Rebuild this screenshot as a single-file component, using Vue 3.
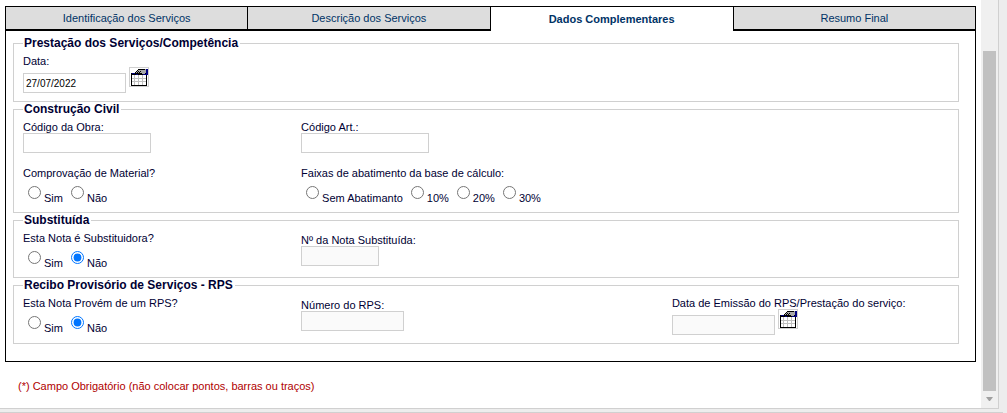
<script setup>
import { ref } from 'vue'

const tabs = ['Identificação dos Serviços', 'Descrição dos Serviços', 'Dados Complementares', 'Resumo Final']
const active = ref(2)

const data = ref('27/07/2022')
const codigoObra = ref('')
const codigoArt = ref('')
const material = ref('')
const faixa = ref('')
const substituidora = ref('Não')
const notaSubstituida = ref('')
const provemRps = ref('Não')
const numeroRps = ref('')
const dataRps = ref('')

const simNao = ['Sim', 'Não']
const faixas = ['Sem Abatimanto', '10%', '20%', '30%']
</script>

<template>
  <div class="frame">
    <div class="viewport">
      <main class="page">
        <form class="panel" @submit.prevent>
          <nav class="tabs">
            <button
              v-for="(tab, i) in tabs"
              :key="tab"
              type="button"
              class="tab"
              :class="{ active: i === active, after: i > active }"
              @click="active = i"
            >{{ tab }}</button>
          </nav>
          <div class="body">
            <fieldset>
              <legend>Prestação dos Serviços/Competência</legend>
              <div class="field">
                <label for="data">Data:</label>
                <div class="date-row">
                  <input id="data" v-model="data" type="text" class="medium" />
                  <button type="button" class="calendar" aria-label="Calendário">
                    <svg viewBox="0 0 18 18" width="18" height="18" shape-rendering="crispEdges">
                      <g id="calendar-icon">
                        <path fill="#000" d="M1 5h16v13H1z" />
                        <path fill="#fff" d="M2 7h14v10H2z" />
                        <path fill="#c0c0c0" d="M4 7h1v10H4zM8 7h1v10H8zM12 7h1v10h-1zM2 10h14v1H2zM2 13h14v1H2z" />
                        <path fill="#000080" d="M16 1h2v6h-2zM2 5h3v1H2zM13 6h3v1h-3zM6 6h2v1H6z" />
                        <path fill="#a8a8a8" d="M8 1h8v4h-1v1h-5V5H5V4h1V3h1V2h1z" />
                        <path fill="#000" d="M8 1h7v1H8zM7 2h1v1H7zM6 3h1v1H6zM5 4h1v1H5zM8 3h1v1H8zM7 4h1v1H7zM9 4h1v1H9zM6 5h1v1H6zM8 5h1v1H8zM10 5h2v1h-2zM10 3h1v1h-1z" />
                      </g>
                    </svg>
                  </button>
                </div>
              </div>
            </fieldset>

            <fieldset>
              <legend>Construção Civil</legend>
              <div class="columns spaced">
                <div class="field">
                  <label for="obra">Código da Obra:</label>
                  <input id="obra" v-model="codigoObra" type="text" class="wide" />
                </div>
                <div class="field">
                  <label for="art">Código Art.:</label>
                  <input id="art" v-model="codigoArt" type="text" class="wide" />
                </div>
              </div>
              <div class="columns">
                <div class="field" role="radiogroup" aria-labelledby="q-material">
                  <span id="q-material">Comprovação de Material?</span>
                  <div class="radios">
                    <label v-for="o in simNao" :key="o"><input v-model="material" type="radio" name="material" :value="o" /><span>{{ o }}</span></label>
                  </div>
                </div>
                <div class="field" role="radiogroup" aria-labelledby="q-faixa">
                  <span id="q-faixa">Faixas de abatimento da base de cálculo:</span>
                  <div class="radios">
                    <label v-for="o in faixas" :key="o"><input v-model="faixa" type="radio" name="faixa" :value="o" /><span>{{ o }}</span></label>
                  </div>
                </div>
              </div>
            </fieldset>

            <fieldset>
              <legend>Substituída</legend>
              <div class="columns">
                <div class="field" role="radiogroup" aria-labelledby="q-subst">
                  <span id="q-subst">Esta Nota é Substituidora?</span>
                  <div class="radios">
                    <label v-for="o in simNao" :key="o"><input v-model="substituidora" type="radio" name="substituidora" :value="o" /><span>{{ o }}</span></label>
                  </div>
                </div>
                <div class="field lowered">
                  <label for="nota">Nº da Nota Substituída:</label>
                  <input id="nota" v-model="notaSubstituida" type="text" class="narrow" disabled />
                </div>
              </div>
            </fieldset>

            <fieldset>
              <legend>Recibo Provisório de Serviços - RPS</legend>
              <div class="columns">
                <div class="field" role="radiogroup" aria-labelledby="q-rps">
                  <span id="q-rps">Esta Nota Provém de um RPS?</span>
                  <div class="radios">
                    <label v-for="o in simNao" :key="o"><input v-model="provemRps" type="radio" name="rps" :value="o" /><span>{{ o }}</span></label>
                  </div>
                </div>
                <div class="field lowered">
                  <label for="rps">Número do RPS:</label>
                  <input id="rps" v-model="numeroRps" type="text" class="medium" disabled />
                </div>
                <div class="field">
                  <label for="data-rps">Data de Emissão do RPS/Prestação do serviço:</label>
                  <div class="date-row">
                    <input id="data-rps" v-model="dataRps" type="text" class="medium" disabled />
                    <button type="button" class="calendar" aria-label="Calendário">
                      <svg viewBox="0 0 18 18" width="18" height="18" shape-rendering="crispEdges">
                        <use href="#calendar-icon" />
                      </svg>
                    </button>
                  </div>
                </div>
              </div>
            </fieldset>
          </div>
        </form>
        <p class="note">(*) Campo Obrigatório (não colocar pontos, barras ou traços)</p>
      </main>
      <div class="scrollbar" aria-hidden="true">
        <div class="thumb"></div>
        <svg class="arrow" viewBox="0 0 7 4" width="7" height="4"><path fill="#a0a0a0" d="M0 0h7L4 4H3z" /></svg>
      </div>
    </div>
    <div class="bottom-edge"></div>
  </div>
</template>

<style>
body {
  margin: 0;
  background: #ededed;
}
</style>

<style scoped>
.frame {
  display: flex;
  flex-direction: column;
  min-height: 100vh;
  background: #ededed;
  font-family: "Liberation Sans", Arial, sans-serif;
  font-size: 11px;
  line-height: 12px;
  color: #000033;
}
.viewport {
  flex: 1;
  display: flex;
  margin-right: 8px;
  border-right: 1px solid #d0d0d0;
  border-bottom: 1px solid #d0d0d0;
  background: #fff;
}
.bottom-edge {
  height: 3px;
  margin-right: 4px;
  border-bottom: 1px solid #d0d0d0;
}
.page {
  flex: 1;
  padding: 6px 5px 0;
}
.panel {
  border: 1px solid #000;
}
.tabs {
  display: grid;
  grid-template-columns: repeat(4, 1fr);
}
.tab {
  height: 24px;
  padding: 0;
  border: 0;
  border-right: 1px solid #000;
  border-bottom: 2px solid #000;
  background: #ddd;
  color: #003366;
  font: 11px/13px "Liberation Sans", Arial, sans-serif;
  cursor: pointer;
}
.tab.active {
  border: 0;
  background: #fff;
  font-weight: bold;
}
.tab.after {
  border-right: 0;
  border-left: 1px solid #000;
}
.body {
  padding: 5px 16px 17px 7px;
}
fieldset {
  min-width: 0;
  margin: 0;
  padding: 4px 8px 8px 9px;
  border: 1px solid #d0d0d0;
}
legend {
  padding: 0 2px 0 1px;
  font-size: 12px;
  line-height: 15px;
  font-weight: bold;
}
.columns {
  display: grid;
  grid-template-columns: 3fr 4fr 3fr;
  align-items: start;
}
.spaced {
  margin-bottom: 14px;
}
.field {
  display: flex;
  flex-direction: column;
  align-items: flex-start;
  white-space: nowrap;
}
.lowered {
  padding-top: 2px;
}
input[type="text"] {
  box-sizing: border-box;
  height: 20px;
  padding: 0 2px;
  border: 1px solid #d0d0d0;
  border-radius: 0;
  background: #fff;
  color: #000;
  font: 10px/13px "Liberation Sans", Arial, sans-serif;
}
input[type="text"]:disabled {
  background: #fafafa;
}
.wide {
  width: 128px;
}
.medium {
  width: 103px;
}
.narrow {
  width: 78px;
}
.date-row {
  display: flex;
  align-items: flex-end;
  gap: 3px;
  height: 26px;
}
.calendar {
  align-self: flex-start;
  width: 20px;
  height: 20px;
  padding: 0;
  border: 1px solid #d0d0d0;
  background: #fff;
  cursor: pointer;
}
.calendar svg {
  display: block;
}
.radios {
  display: flex;
  gap: 8px;
  margin-top: 7px;
  padding-left: 5px;
}
.radios label {
  display: flex;
  align-items: flex-start;
  gap: 3px;
}
.radios input {
  width: 13px;
  height: 13px;
  margin: 0;
}
.radios span {
  padding-top: 6px;
}
.note {
  margin: 18px 13px 0;
  color: #b00000;
}
.scrollbar {
  display: flex;
  flex-direction: column;
  align-items: center;
  width: 17px;
  background: #f0f0f0;
}
.thumb {
  flex: 1;
  width: 13px;
  margin-top: 51px;
  background: #c1c1c1;
}
.arrow {
  margin: 6px 0 7px;
}
</style>
